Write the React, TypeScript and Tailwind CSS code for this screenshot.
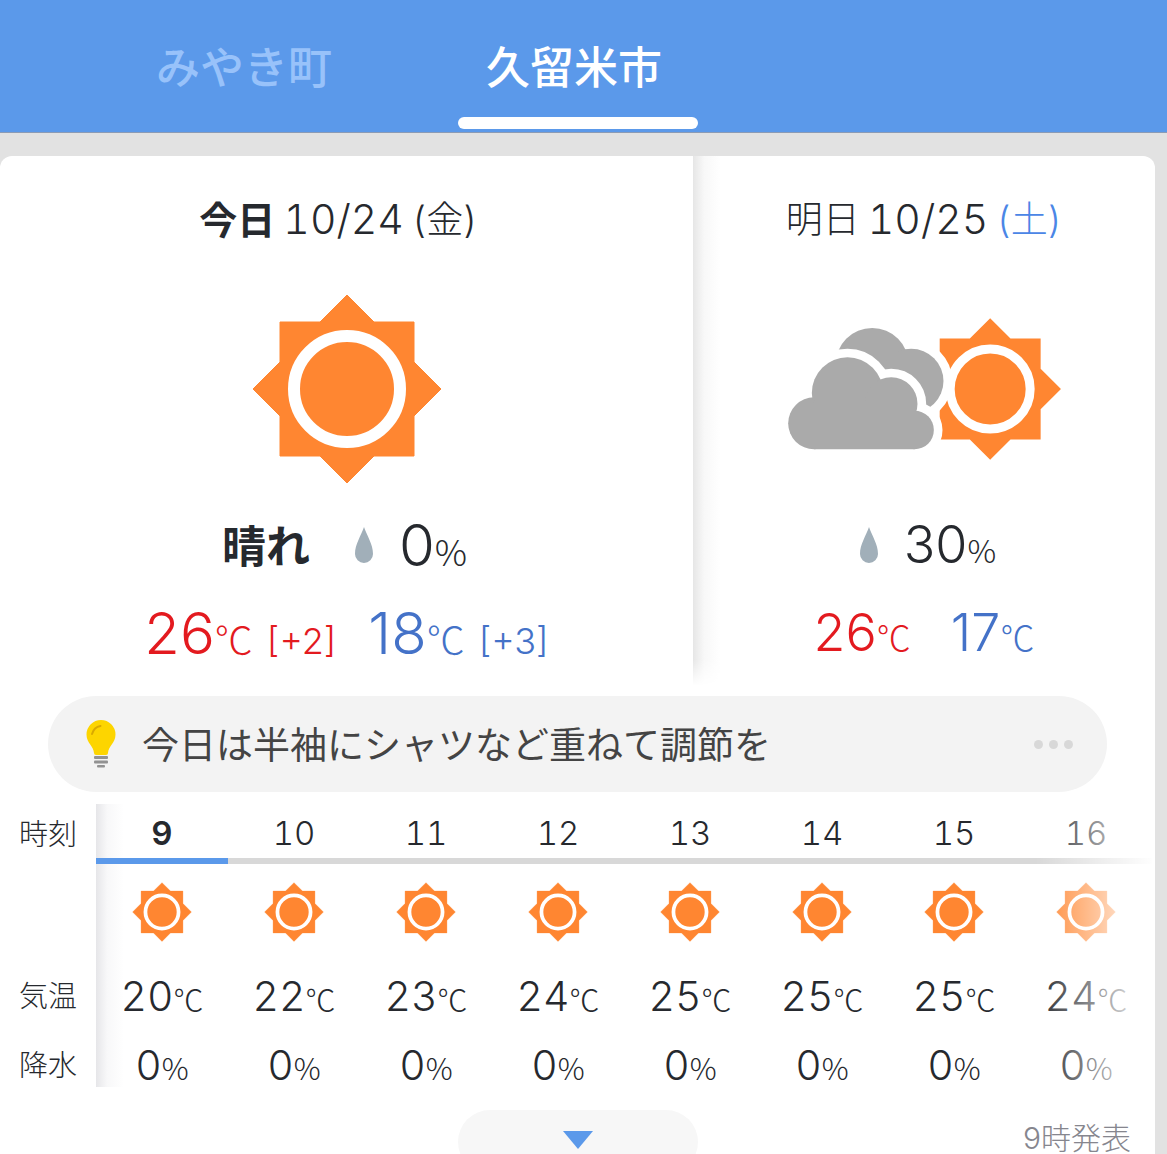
import { useState } from "react";
import clsx from "clsx";

const cities = ["みやき町", "久留米市"];

const hours = [
  { hour: 9, temp: 20, rain: 0 },
  { hour: 10, temp: 22, rain: 0 },
  { hour: 11, temp: 23, rain: 0 },
  { hour: 12, temp: 24, rain: 0 },
  { hour: 13, temp: 25, rain: 0 },
  { hour: 14, temp: 25, rain: 0 },
  { hour: 15, temp: 25, rain: 0 },
  { hour: 16, temp: 24, rain: 0 },
];

const sunPath =
  "M0-94 27-67H67V-27L94 0 67 27V67H27L0 94-27 67H-67V27L-94 0-67-27V-67H-27Z";

const Sun = ({ className }: { className: string }) => (
  <svg viewBox="-96 -96 192 192" className={className} aria-label="晴れ">
    <path
      d={sunPath}
      fill="#ff8631"
      stroke="#ff8631"
      strokeWidth="1"
      strokeLinejoin="round"
    />
    <circle r="53" fill="#ff8631" stroke="#fff" strokeWidth="12" />
  </svg>
);

const backCloud = (
  <>
    <circle cx="577" cy="793" r="110" />
    <circle cx="694" cy="842" r="97" />
  </>
);

const frontCloud = (
  <>
    <circle cx="403" cy="969" r="78" />
    <circle cx="503" cy="878" r="107" />
    <circle cx="634" cy="910" r="79" />
    <circle cx="704" cy="989" r="58" />
    <path d="M403 900H704V1047H403Z" />
  </>
);

const CloudSun = ({ className }: { className: string }) => (
  <svg
    viewBox="322 650 824 432"
    className={className}
    aria-label="曇りのち晴れ"
  >
    <path
      d={sunPath}
      transform="translate(931 866) scale(2.26)"
      fill="#ff8631"
    />
    <circle
      cx="931"
      cy="866"
      r="120"
      fill="#ff8631"
      stroke="#fff"
      strokeWidth="27"
    />
    <g fill="#fff" stroke="#fff" strokeWidth="52">
      {backCloud}
    </g>
    <g fill="#aaa">{backCloud}</g>
    <g fill="#fff" stroke="#fff" strokeWidth="52">
      {frontCloud}
    </g>
    <g fill="#aaa">{frontCloud}</g>
  </svg>
);

const Drop = () => (
  <svg viewBox="0 0 18 36" className="h-9 w-[18px]" aria-label="降水確率">
    <path
      d="M9 0C6 9 0 17 0 27A9 9 0 0 0 18 27C18 17 12 9 9 0Z"
      fill="#a1afb9"
    />
  </svg>
);

const Bulb = () => (
  <svg viewBox="0 0 30 48" className="h-12 w-[30px]" aria-hidden="true">
    <path
      d="M15 0A14.500 14.500 0 0 0 .5 14.500C.5 23 7.500 26 8 33Q8 35 10 35H20Q22 35 22 33C22.500 26 29.500 23 29.500 14.500A14.500 14.500 0 0 0 15 0Z"
      fill="#fdd500"
    />
    <path
      d="M6 14Q8 7 14.500 6"
      fill="none"
      stroke="#d9a900"
      strokeWidth="2"
      strokeLinecap="round"
    />
    <g fill="#929292">
      <rect x="8" y="36" width="14" height="3" rx="1" />
      <rect x="8" y="40.500" width="14" height="3" rx="1" />
      <rect x="11" y="45" width="8" height="2.500" rx="1" />
    </g>
  </svg>
);

const Unit = ({ children, className }: { children: string; className: string }) => (
  <span className={clsx("font-['Noto_Sans_CJK_JP',sans-serif]", className)}>
    {children}
  </span>
);

const rowLabel = "text-left text-[29px] font-light pl-[19px] whitespace-nowrap";

export default function App() {
  const [city, setCity] = useState<string>("久留米市");
  const [open, setOpen] = useState<boolean>(false);

  return (
    <div className="flex h-screen flex-col overflow-hidden bg-[#e2e2e2] font-[Inter,'Noto_Sans_CJK_JP',sans-serif] font-light text-[#26292e]">
      <nav className="flex h-[133px] shrink-0 gap-[90px] border-b border-[#8b9bb5] bg-[#5b99ea] pl-32">
        {cities.map((item) => (
          <button
            key={item}
            onClick={() => setCity(item)}
            className="flex w-60 flex-col items-center justify-between pt-9 pb-[3px]"
          >
            <span
              className={clsx(
                "pr-2 text-[44px] leading-[64px] font-medium",
                item === city ? "text-white" : "text-[#98c2fa]"
              )}
            >
              {item}
            </span>
            <span
              className={clsx(
                "h-3 w-full rounded-md",
                item === city && "bg-white"
              )}
            />
          </button>
        ))}
      </nav>

      <main className="mt-[23px] mr-3 flex grow flex-col overflow-hidden rounded-t-xl bg-white">
        <div className="flex h-[530px] shrink-0">
          <section className="flex w-3/5 flex-col items-center">
            <h2 className="flex h-32 items-center gap-2 pr-4 text-[41px] font-light tabular-nums">
              <b className="text-[38px] font-bold">今日</b>
              <span>10/24</span>
              <span className="text-[37px]">(金)</span>
            </h2>
            <Sun className="mt-[9px] size-48" />
            <div className="mt-5 flex h-20 items-center pr-1">
              <b className="pt-1 text-[44px] font-bold">晴れ</b>
              <span className="mr-[26px] ml-[45px]">
                <Drop />
              </span>
              <span className="text-[58px] leading-none">
                0<Unit className="text-[36px]">%</Unit>
              </span>
            </div>
            <div className="flex h-24 items-center gap-8 text-[58px] leading-none">
              <span className="text-[#e31a1f]">
                26<Unit className="text-[38px]">℃</Unit>
                <span className="ml-[14px] text-[36px]">[+2]</span>
              </span>
              <span className="text-[#4472c8]">
                18<Unit className="text-[38px]">℃</Unit>
                <span className="ml-[14px] text-[36px]">[+3]</span>
              </span>
            </div>
          </section>

          <section className="relative flex w-2/5 flex-col items-center">
            <div className="pointer-events-none absolute top-0 bottom-0 left-0 w-7 bg-linear-to-r from-[#e6e6e6] via-[#f8f8f8] via-40% to-white mask-b-from-95%" />
            <h2 className="flex h-32 items-center gap-2 text-[41px] font-light tabular-nums">
              <span className="text-[37px]">明日</span>
              <span>10/25</span>
              <span className="text-[37px] text-[#4b86e6]">(土)</span>
            </h2>
            <CloudSun className="mt-[33px] h-36 w-[275px]" />
            <div className="mt-11 flex h-20 items-center gap-[26px] pl-2">
              <Drop />
              <span className="text-[52px] leading-none">
                30<Unit className="text-[32px]">%</Unit>
              </span>
            </div>
            <div className="flex h-24 items-center gap-10 text-[52px] leading-none">
              <span className="text-[#e31a1f]">
                26<Unit className="text-[34px]">℃</Unit>
              </span>
              <span className="text-[#4472c8]">
                17<Unit className="text-[34px]">℃</Unit>
              </span>
            </div>
          </section>
        </div>

        <button className="mx-12 mt-[10px] flex h-24 shrink-0 items-center rounded-full bg-[#f3f3f3] pr-[34px] pl-[38px] text-left">
          <Bulb />
          <span className="ml-[26px] grow pt-1 text-[37px] font-normal text-[#444]">
            今日は半袖にシャツなど重ねて調節を
          </span>
          <span className="flex gap-[6px]">
            <i className="size-[9px] rounded-full bg-[#d8d8d8]" />
            <i className="size-[9px] rounded-full bg-[#d8d8d8]" />
            <i className="size-[9px] rounded-full bg-[#d8d8d8]" />
          </span>
        </button>

        <div className="relative mt-3 shrink-0 pr-[3px]">
          <div className="absolute top-0 bottom-[10px] left-24 w-7 bg-linear-to-r from-[#e6e6e9] via-[#f8f8f9] via-40% to-white" />
          <table className="relative w-full table-fixed border-collapse text-center tabular-nums">
            <colgroup>
              <col className="w-24" />
              {hours.map((item) => (
                <col key={item.hour} />
              ))}
            </colgroup>
            <tbody>
              <tr className="h-[57px] text-[33px]">
                <th className={clsx(rowLabel, "pt-1")}>時刻</th>
                {hours.map((item, index) => (
                  <th
                    key={item.hour}
                    className={clsx(
                      "border-b-[6px] pt-1 leading-none",
                      index === 0
                        ? "border-[#5b99ea] font-semibold"
                        : "border-[#d8d8d8] font-light"
                    )}
                  >
                    {item.hour}
                  </th>
                ))}
              </tr>
              <tr className="h-[98px]">
                <td />
                {hours.map((item) => (
                  <td key={item.hour}>
                    <Sun className="mx-auto size-[60px]" />
                  </td>
                ))}
              </tr>
              <tr className="h-[74px] text-[41px] leading-none">
                <th className={rowLabel}>気温</th>
                {hours.map((item) => (
                  <td key={item.hour}>
                    {item.temp}
                    <Unit className="text-[30px]">℃</Unit>
                  </td>
                ))}
              </tr>
              <tr className="h-16 text-[41px] leading-none">
                <th className={rowLabel}>降水</th>
                {hours.map((item) => (
                  <td key={item.hour}>
                    {item.rain}
                    <Unit className="text-[30px]">%</Unit>
                  </td>
                ))}
              </tr>
            </tbody>
          </table>
          <div className="pointer-events-none absolute top-0 right-0 bottom-0 w-[120px] bg-linear-to-r from-white/0 to-white" />
        </div>

        <div className="mt-[13px] grid shrink-0 grid-cols-[1fr_240px_1fr]">
          <button
            onClick={() => setOpen(!open)}
            aria-expanded={open}
            aria-label="もっと見る"
            className="col-start-2 flex h-16 items-start justify-center rounded-full bg-[#f7f7f7] pt-[21px]"
          >
            <svg viewBox="0 0 30 18" className="h-[18px] w-[30px]">
              <path d="M0 0H30L15 18Z" fill="#5b99ea" />
            </svg>
          </button>
          <p className="pt-[13px] pr-6 text-right text-[30px] leading-[30px] text-[#86868e]">
            9時発表
          </p>
        </div>
      </main>
    </div>
  );
}
